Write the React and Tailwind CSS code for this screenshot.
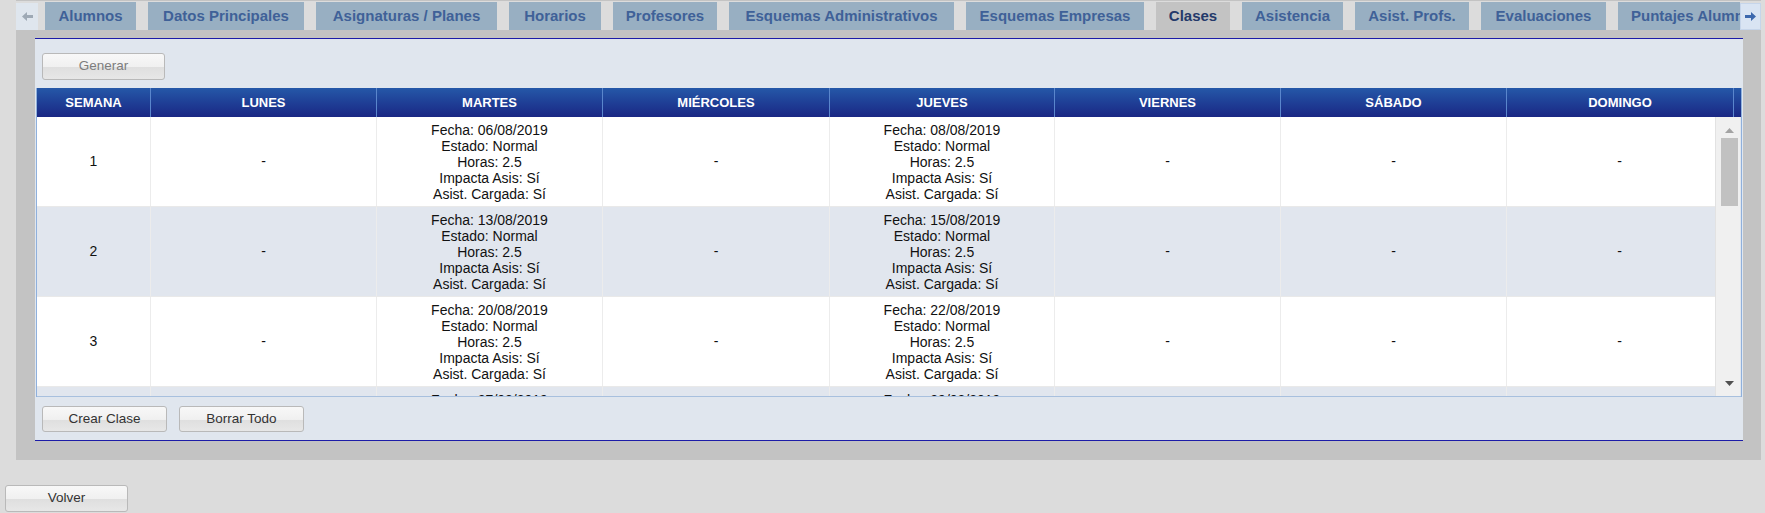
const tabs = [
  { label: 'Alumnos', w: 91 },
  { label: 'Datos Principales', w: 156 },
  { label: 'Asignaturas / Planes', w: 181 },
  { label: 'Horarios', w: 92 },
  { label: 'Profesores', w: 104 },
  { label: 'Esquemas Administrativos', w: 225 },
  { label: 'Esquemas Empresas', w: 178 },
  { label: 'Clases', w: 74, active: true },
  { label: 'Asistencia', w: 101 },
  { label: 'Asist. Profs.', w: 114 },
  { label: 'Evaluaciones', w: 125 },
  { label: 'Puntajes Alumnos', w: 150, left: true },
];

const days = ['SEMANA', 'LUNES', 'MARTES', 'MIÉRCOLES', 'JUEVES', 'VIERNES', 'SÁBADO', 'DOMINGO'];

const weeks = [
  { n: 1, mar: '06/08/2019', jue: '08/08/2019' },
  { n: 2, mar: '13/08/2019', jue: '15/08/2019' },
  { n: 3, mar: '20/08/2019', jue: '22/08/2019' },
  { n: 4, mar: '27/08/2019', jue: '29/08/2019' },
];

const cols = 'grid grid-cols-[114px_226px_226px_227px_225px_226px_226px_226px] w-[1696px]';

function Arrow({ dir, color }) {
  return (
    <svg width="11" height="9" viewBox="0 0 11 9" className={dir === 'right' ? 'rotate-180' : ''}>
      <polygon points="0,4.5 5,0 5,3 11,3 11,6 5,6 5,9" fill={color} />
    </svg>
  );
}

function Btn({ children, disabled, className = '' }) {
  return (
    <button
      className={
        'rounded-[3px] border border-[#b9b9b9] bg-[linear-gradient(to_bottom,#f8f8f8_0%,#f0f0f0_52%,#dfdfdf_54%,#e7e7e7_100%)] text-[13.5px] ' +
        (disabled ? 'text-[#7d7d7d] ' : 'text-[#333] ') +
        className
      }
    >
      {children}
    </button>
  );
}

function Clase({ fecha }) {
  return (
    <div className="leading-[16px]">
      <div>Fecha: {fecha}</div>
      <div>Estado: Normal</div>
      <div>Horas: 2.5</div>
      <div>Impacta Asis: Sí</div>
      <div>Asist. Cargada: Sí</div>
    </div>
  );
}

export default function App() {
  return (
    <div className="w-[1765px] h-[513px] overflow-hidden bg-[#dcdcdc] font-['Liberation_Sans',Arial,sans-serif]">
      <div className="ml-[16px] w-[1745px]">
        {/* tab strip */}
        <div className="h-[30px] border-t border-[#c3c3c3] pt-[1px] flex">
          <div className="w-[22px] h-[27px] mt-[1px] bg-[#dfe6ee] flex items-center justify-center">
            <Arrow dir="left" color="#9ea9b5" />
          </div>
          <div className="flex-1 overflow-hidden flex gap-[12px] pl-[7px]">
            {tabs.map((t) => (
              <div
                key={t.label}
                style={{ width: t.w }}
                className={
                  'shrink-0 h-[28px] flex items-center whitespace-nowrap text-[15px] font-bold ' +
                  (t.left ? 'justify-start pl-[13px] ' : 'justify-center ') +
                  (t.active ? 'bg-[#c3c3c3] text-[#24396a]' : 'bg-[#98afc2] text-[#3f6198]')
                }
              >
                {t.label}
              </div>
            ))}
          </div>
          <div className="w-[21px] h-[27px] mt-[1px] bg-[#d9e4f3] border border-[#c6d5ea] flex items-center justify-center">
            <Arrow dir="right" color="#3c68ad" />
          </div>
        </div>

        {/* gray panel */}
        <div className="bg-[#c3c3c3] h-[430px] pt-[8px] pl-[19px] pr-[18px]">
          <div className="bg-[#e0e6ee] border-y border-[#1c1ca8] h-[403px]">
            <div className="pt-[14px] pl-[7px]">
              <Btn disabled className="w-[123px] h-[27px]">Generar</Btn>
            </div>

            {/* grid */}
            <div className="mt-[8px] ml-[1px] w-[1706px] border-x border-[#8fb0dc]">
              <div className="h-[29px] flex bg-[linear-gradient(to_bottom,#2558a8_0%,#1f3f96_50%,#1a2784_100%)]">
                <div className={cols}>
                  {days.map((d, i) => (
                    <div
                      key={d}
                      className={
                        'flex items-center justify-center text-white font-bold text-[13px] border-[#5a86cc] ' +
                        (i < 7 ? 'border-r' : '')
                      }
                    >
                      {d}
                    </div>
                  ))}
                </div>
                <div className="w-[8px] border-l border-[#5a86cc]" />
              </div>

              <div className="h-[280px] flex border-b border-[#a8c0de]">
                <div className="w-[1679px] overflow-hidden bg-white border-r border-[#e2e2e2]">
                  {weeks.map((w, idx) => (
                    <div
                      key={w.n}
                      className={
                        cols +
                        ' h-[90px] border-b border-[#e9e9e9] text-[14px] text-[#111] ' +
                        (idx % 2 === 1 ? 'bg-[#e1e6ee]' : 'bg-white')
                      }
                    >
                      {[
                        String(w.n),
                        '-',
                        <Clase fecha={w.mar} />,
                        '-',
                        <Clase fecha={w.jue} />,
                        '-',
                        '-',
                        '-',
                      ].map((c, i) => (
                        <div
                          key={i}
                          className="flex items-center justify-center text-center border-r border-[#ececec]"
                        >
                          {c}
                        </div>
                      ))}
                    </div>
                  ))}
                </div>
                <div className="w-[24px] bg-[#f0f0f0] flex flex-col items-center pl-[3px]">
                  <div className="h-[21px] flex items-end justify-center pb-[5px]">
                    <svg width="9" height="5" viewBox="0 0 9 5">
                      <polygon points="0,5 4.5,0 9,5" fill="#a3a3a3" />
                    </svg>
                  </div>
                  <div className="w-[17px] h-[68px] bg-[#c1c1c1]" />
                  <div className="flex-1" />
                  <div className="h-[18px] flex items-start justify-center pt-[3px]">
                    <svg width="9" height="5" viewBox="0 0 9 5">
                      <polygon points="0,0 9,0 4.5,5" fill="#505050" />
                    </svg>
                  </div>
                </div>
              </div>
            </div>

            <div className="pt-[9px] pl-[7px] flex gap-[12px]">
              <Btn className="w-[125px] h-[26px]">Crear Clase</Btn>
              <Btn className="w-[125px] h-[26px]">Borrar Todo</Btn>
            </div>
          </div>
        </div>
      </div>

      <div className="mt-[25px] ml-[5px]">
        <Btn className="w-[123px] h-[27px]">Volver</Btn>
      </div>
    </div>
  );
}
